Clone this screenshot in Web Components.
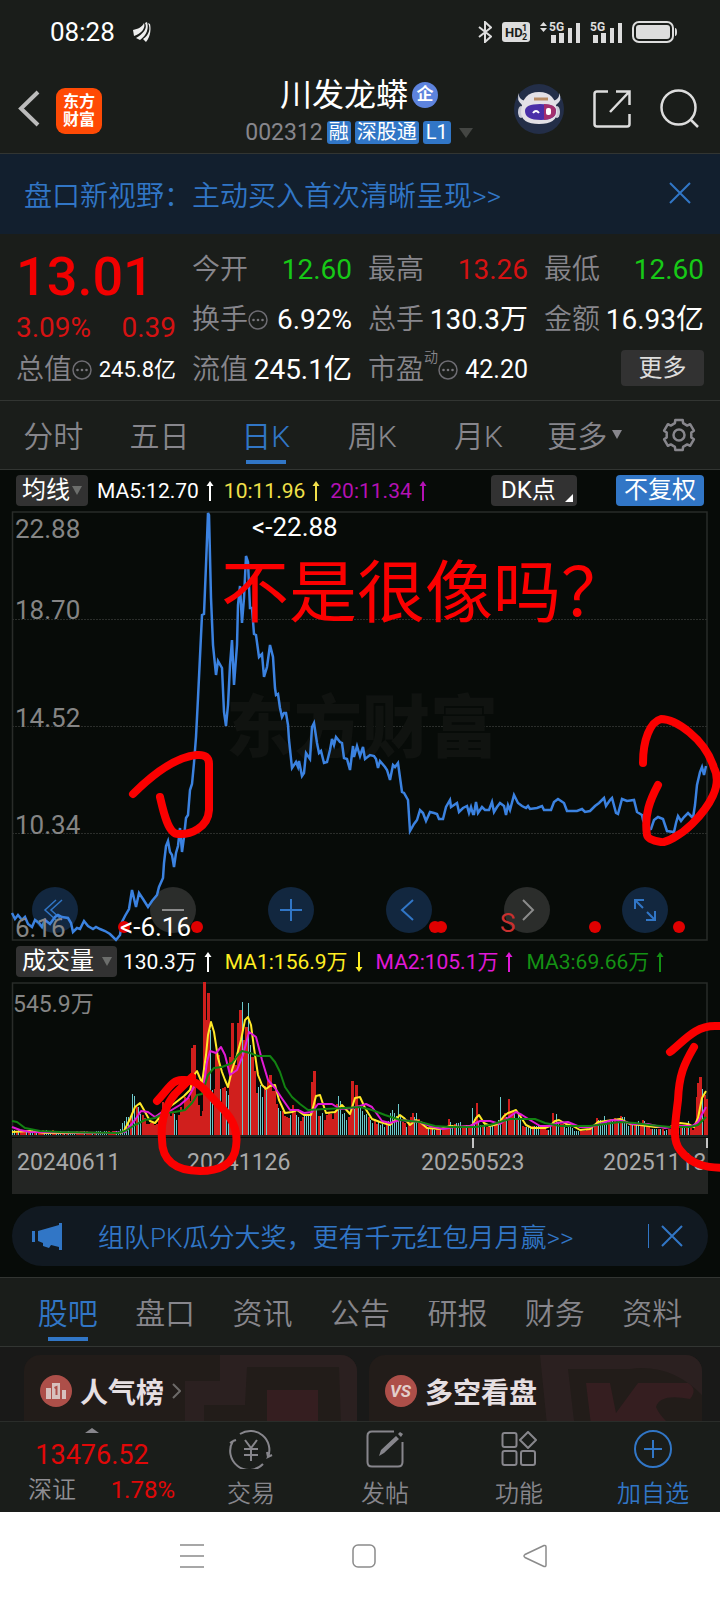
<!DOCTYPE html>
<html lang="zh-CN">
<head>
<meta charset="utf-8">
<meta name="viewport" content="width=device-width, initial-scale=1">
<title>川发龙蟒 002312</title>
<style>
    body {
        margin: 0;
        background: #1a1d1a;
        color: #fff;
        font-family: Roboto, "Noto Sans CJK SC", sans-serif;
        --panel: #1a1d1a;
        --ink: #070b08;
        --line: #323532;
        --muted: #87868c;
        --blue: #3176c6;
        --up: #d51212;
        --down: #17c917;
        --thin: 350;
    }
</style>
</head>
<body>
<stock-page></stock-page>

<script>
// six-tooth gear outline for the settings icon
function gearPath(c, outer, inner) {
    const pts = [];
    for (let k = 0; k < 6; k++) {
        [[-19, inner], [-14, outer], [14, outer], [19, inner]].forEach(([a, r]) => {
            const t = (k * 60 + a) * Math.PI / 180;
            pts.push((c + r * Math.sin(t)).toFixed(1) + ' ' + (c - r * Math.cos(t)).toFixed(1));
        });
    }
    return 'M' + pts.join('L') + 'Z';
}

const ICONS = {
    leaf: [18, 20, '<g fill="#eee"><path d="M0 8C5 7 9 5 11 1 13 6 8 12 1 14Z"/><path d="M12 1C15 6 10 12 3 16L7 18C14 13 16 6 14 0Z"/><path d="M15 1C18 7 16 13 10 17L13 20C18 14 18 6 17 2Z"/></g>'],
    bluetooth: [14, 22, '<path d="M1 6L13 15.500L7 21V1L13 6.500L1 16" fill="none" stroke="#ddd" stroke-width="2"/>'],
    hd: [28, 20, '<rect width="28" height="20" rx="3" fill="#ddd"/><text x="3" y="15" font-size="13" font-weight="700" fill="#1a1d1a">HD</text><text x="20" y="9" font-size="9" font-weight="700" fill="#1a1d1a">1</text><text x="20" y="18" font-size="9" font-weight="700" fill="#1a1d1a">2</text>'],
    signalData: [40, 23, '<g fill="#ddd"><path d="M0 5L3.500 1L7 5ZM0 7L3.500 11L7 7Z"/><text x="9" y="10" font-size="12" font-weight="700">5G</text><path d="M11 14h5v8h-5zM19 12h5v10h-5zM28 7h4v15h-4zM36 2h4v20h-4z"/></g>'],
    signal: [32, 23, '<g fill="#ddd"><text x="0" y="10" font-size="12" font-weight="700">5G</text><path d="M3 14h5v8H3zM11 12h5v10h-5zM20 7h4v15h-4zM28 2h4v20h-4z"/></g>'],
    battery: [45, 22, '<rect x="1" y="1" width="40" height="20" rx="6" fill="none" stroke="#ddd" stroke-width="2"/><rect x="4" y="4" width="34" height="14" rx="3" fill="#ddd"/><path d="M43 7q2 0 2 4t-2 4z" fill="#ddd"/>'],
    back: [22, 37, '<path d="M20 2L3 18.500L20 35" fill="none" stroke="#bbb" stroke-width="4"/>'],
    robot: [50, 50, '<circle cx="25" cy="25" r="25" fill="#232e48"/><path d="M5 9Q4 15 11 17L39 17Q46 15 45 9Q49 16 42 21L8 21Q2 16 5 9Z" fill="#dcdce4"/><ellipse cx="7" cy="28" rx="3" ry="6" fill="#c9c9d4"/><ellipse cx="43" cy="28" rx="3" ry="6" fill="#c9c9d4"/><path d="M7 28Q8 8 25 8Q42 8 43 28Q43 40 25 40Q7 40 7 28Z" fill="#e3e0e6"/><path d="M11 27Q11 20 26 20Q42 20 42 27Q42 36 27 36Q11 36 11 27Z" fill="#4a2fa8"/><path d="M30 20Q42 20 42 27Q42 35 30 36Z" fill="#a32f6e"/><path d="M19 29q3 -4 6 0" stroke="#fff" stroke-width="2" fill="none"/><rect x="32" y="24" width="5" height="7" rx="2" fill="#fff"/><path d="M20 15h14" stroke="#b88a63" stroke-width="3"/>'],
    share: [38, 38, '<g fill="none" stroke="#ddd" stroke-width="2.500"><path d="M15 1.500H4Q1.500 1.500 1.500 4V34Q1.500 36.500 4 36.500H34Q36.500 36.500 36.500 34V24"/><path d="M23 1.500H36.500V15M36 2L17 22"/></g>'],
    search: [40, 40, '<g fill="none" stroke="#ddd" stroke-width="2.500"><circle cx="18.500" cy="18.500" r="17"/><path d="M31 31L38 38"/></g>'],
    close: [22, 22, '<path d="M1 1L21 21M21 1L1 21" stroke="#3176c6" stroke-width="2"/>'],
    dots: [20, 20, '<circle cx="10" cy="10" r="9" fill="none" stroke="#6d6c72" stroke-width="1.500"/><g fill="#77767c"><circle cx="5.500" cy="10" r="1.300"/><circle cx="10" cy="10" r="1.300"/><circle cx="14.500" cy="10" r="1.300"/></g>'],
    gear: [34, 34, '<g fill="none" stroke="#87868c" stroke-width="2.500" stroke-linejoin="round"><path d="' + gearPath(17, 15.5, 12.5) + '"/><circle cx="17" cy="17" r="5.500"/></g>'],
    caret: [10, 9, '<path d="M0 0H10L5 9Z" fill="currentColor"/>'],
    wide: [14, 10, '<path d="M0 0H14L7 10Z" fill="#444643"/>'],
    corner: [8, 8, '<path d="M8 0V8H0Z" fill="#fff"/>'],
    up: [10, 20, '<path d="M5 20V3" stroke="currentColor" stroke-width="2"/><path d="M5 0L8.500 5H1.500Z" fill="currentColor"/>'],
    down: [10, 20, '<path d="M5 0V17" stroke="currentColor" stroke-width="2"/><path d="M5 20L8.500 15H1.500Z" fill="currentColor"/>'],
    rewind: [46, 46, '<path d="M24 13L13 23L24 33M30 13L19 23L30 33" fill="none" stroke="#3176c6" stroke-width="1.500"/>'],
    minus: [46, 46, '<path d="M12 23H34" stroke="#8b8b8b" stroke-width="2"/>'],
    plus: [46, 46, '<path d="M12 23H34M23 12V34" stroke="#3176c6" stroke-width="2"/>'],
    prev: [46, 46, '<path d="M27 13L16 23L27 33" fill="none" stroke="#3176c6" stroke-width="2"/>'],
    next: [46, 46, '<path d="M19 13L29 23L19 33" fill="none" stroke="#8b8b8b" stroke-width="2"/>'],
    expand: [46, 46, '<path d="M13 22V13H22M13 13L21 21M33 24V33H24M33 33L25 25" fill="none" stroke="#3176c6" stroke-width="2"/>'],
    horn: [30, 27, '<path d="M0 8H3V19H0ZM6 8L27 2V0H30V27H27V24L19 22L17 25L11 23V20L6 18Z" fill="#3176c6"/>'],
    podium: [32, 32, '<circle cx="16" cy="16" r="16" fill="#ad4f49"/><path d="M6 13h5v11H6zM12 8h8v16h-8zM22 15h4v9h-4z" fill="#d7c0bd"/><path d="M14.500 13L16.500 12V20" stroke="#ad4f49" stroke-width="2" fill="none"/>'],
    versus: [32, 32, '<circle cx="16" cy="16" r="16" fill="#ad4f49"/><text x="5" y="22" font-size="17" font-weight="700" font-style="italic" fill="#e2cfcc">VS</text>'],
    chevron: [9, 16, '<path d="M1 1L8 8L1 15" fill="none" stroke="#6d6a68" stroke-width="2"/>'],
    peak: [14, 5, '<path d="M0 5L7 0L14 5Z" fill="#87868c"/>'],
    trade: [44, 40, '<g fill="none" stroke="#87868c" stroke-width="2"><path d="M11 5A19 19 0 0 1 39 28L43 26M39 28L38 23"/><path d="M34 35A19 19 0 0 1 4 12L1 14M4 12L7 11"/><path d="M16 11L22 19L28 11M15 20H29M15 26H29M22 19V32"/></g>'],
    post: [38, 38, '<path d="M28 1.500H6Q1.500 1.500 1.500 6V32Q1.500 36.500 6 36.500H32Q36.500 36.500 36.500 32V12" fill="none" stroke="#87868c" stroke-width="2"/><path d="M13 26L15 20L30 6L33 9L18 23ZM32 4L34 2L37 4L35 7Z" fill="#87868c"/>'],
    grid: [36, 36, '<g fill="none" stroke="#87868c" stroke-width="2"><rect x="1.500" y="2" width="14" height="14" rx="2"/><path d="M27 1L35 9L27 17L19 9Z" stroke-linejoin="round"/><rect x="1.500" y="20" width="14" height="14" rx="2"/><rect x="20" y="20" width="14" height="14" rx="2"/></g>'],
    add: [38, 38, '<g fill="none" stroke="#3176c6" stroke-width="2"><circle cx="19" cy="19" r="18"/><path d="M10 19H28M19 10V28"/></g>'],
    menu: [24, 24, '<path d="M0 1H24M0 12H24M0 23H24" stroke="#8b8b8b" stroke-width="1.500"/>'],
    home: [24, 24, '<rect x="1" y="1" width="22" height="22" rx="5" fill="none" stroke="#8b8b8b" stroke-width="1.500"/>'],
    return: [24, 24, '<path d="M21 1.500L2 10.500Q0 12 2 13.500L21 22.500Q23 23 23 21V3Q23 1 21 1.500Z" fill="none" stroke="#8b8b8b" stroke-width="1.500"/>']
};

function define(tag, css, html) {
    customElements.define(tag, class extends HTMLElement {
        constructor() {
            super();
            const shadow = this.attachShadow({ mode: 'open' });
            shadow.innerHTML = `
                <style>
                    * { box-sizing: border-box; }
                    button {
                        margin: 0; padding: 0; border: 0; background: none;
                        color: inherit; font: inherit; cursor: pointer;
                    }
                    ${css}
                </style>
                ${html}`;
        }
    });
}

customElements.define('app-icon', class extends HTMLElement {
    connectedCallback() {
        if (this.shadowRoot) return;
        const [w, h, body] = ICONS[this.getAttribute('name')];
        this.attachShadow({ mode: 'open' }).innerHTML = `
            <style>
                :host { display: inline-block; flex: none; line-height: 0; }
                svg { display: block; font-family: Roboto, sans-serif; }
            </style>
            <svg width="${w}" height="${h}" viewBox="0 0 ${w} ${h}" aria-hidden="true">${body}</svg>`;
    }
});

define('status-bar', `
    :host { display: flex; align-items: center; height: 64px; padding: 0 43px 0 50px; }
    time { font-size: 26px; margin-right: 18px; }
    .right { display: flex; align-items: center; gap: 10px; margin-left: auto; }
`, `
    <time>08:28</time><app-icon name="leaf"></app-icon>
    <div class="right">
        <app-icon name="bluetooth"></app-icon>
        <app-icon name="hd"></app-icon>
        <app-icon name="signalData"></app-icon>
        <app-icon name="signal"></app-icon>
        <app-icon name="battery"></app-icon>
    </div>
`);

define('app-header', `
    :host {
        display: grid; grid-template-columns: 1fr auto 1fr; align-items: center; box-sizing: border-box;
        height: 90px; padding: 4px 20px 0 18px; border-bottom: 1px solid var(--line);
    }
    .side { display: flex; align-items: center; gap: 16px; }
    .side.end { justify-content: flex-end; gap: 29px; }
    .logo {
        width: 46px; height: 46px; padding-top: 5px; border-radius: 9px; background: #ff4a05;
        font-size: 16px; line-height: 18px; font-weight: 700; text-align: center;
    }
    .title { display: flex; flex-direction: column; align-items: center; gap: 8px; }
    h1 { display: flex; align-items: center; gap: 4px; margin: 0; font-size: 32px; line-height: 36px; font-weight: 400; }
    .badge {
        width: 26px; height: 26px; border-radius: 50%; background: #5d83dd;
        font-size: 17px; line-height: 25px; font-weight: 700; text-align: center;
    }
    .sub { display: flex; align-items: center; gap: 4px; color: var(--muted); font-size: 23px; line-height: 23px; }
    .tag { padding: 0 2px; border-radius: 3px; background: var(--blue); color: #fff; font-size: 20px; line-height: 23px; }
    .tag.level { padding: 0 3px; }
    .sub app-icon { margin-left: 4px; }
`, `
    <div class="side">
        <button aria-label="返回"><app-icon name="back"></app-icon></button>
        <div class="logo">东方<br>财富</div>
    </div>
    <div class="title">
        <h1>川发龙蟒<span class="badge">企</span></h1>
        <div class="sub">002312<span class="tag">融</span><span class="tag">深股通</span><span class="tag level">L1</span><app-icon name="wide"></app-icon></div>
    </div>
    <div class="side end">
        <button aria-label="助手"><app-icon name="robot"></app-icon></button>
        <button aria-label="分享"><app-icon name="share"></app-icon></button>
        <button aria-label="搜索"><app-icon name="search"></app-icon></button>
    </div>
`);

define('tip-banner', `
    :host {
        display: flex; align-items: center; justify-content: space-between; height: 80px;
        padding: 0 29px 0 24px; background: #121f2e; color: var(--blue); font-size: 28px;
    }
    a { color: inherit; text-decoration: none; font-weight: var(--thin); }
`, `
    <a href="#"><slot></slot></a>
    <button aria-label="关闭"><app-icon name="close"></app-icon></button>
`);

// label on the left, value on the right
define('quote-cell', `
    :host { display: flex; align-items: center; justify-content: space-between; height: 50px; white-space: nowrap; }
    .label { display: flex; align-items: center; color: var(--muted); font-weight: var(--thin); }
    .value { color: var(--tone, #fff); font-size: var(--size, 28px); }
`, `
    <span class="label"><slot name="label"></slot></span>
    <span class="value"><slot></slot></span>
`);

define('quote-panel', `
    :host {
        display: grid; grid-template-columns: repeat(4, 1fr); column-gap: 16px;
        padding: 11px 16px 5px; border-bottom: 1px solid var(--line); font-size: 28px; line-height: 36px;
    }
    .price { height: 66px; color: #f20000; font-size: 54px; line-height: 64px; font-weight: 500; }
    .change { display: flex; justify-content: space-between; height: 34px; line-height: 34px; color: var(--up); }
    .red { --tone: var(--up); }
    .green { --tone: var(--down); }
    .small { --size: 22px; }
    .mid { --size: 25px; }
    sup { align-self: flex-start; font-size: 14px; line-height: 10px; }
    .more { display: flex; align-items: center; justify-content: flex-end; height: 46px; }
    .more button { width: 83px; height: 36px; border-radius: 4px; background: #323232; color: #ddd; font-size: 24px; line-height: 36px; }
`, `
    <div>
        <div class="price">13.01</div>
        <div class="change"><span>3.09%</span><span>0.39</span></div>
        <quote-cell class="small"><span slot="label">总值</span><app-icon slot="label" name="dots"></app-icon>245.8亿</quote-cell>
    </div>
    <div>
        <quote-cell class="green"><span slot="label">今开</span>12.60</quote-cell>
        <quote-cell><span slot="label">换手</span><app-icon slot="label" name="dots"></app-icon>6.92%</quote-cell>
        <quote-cell><span slot="label">流值</span>245.1亿</quote-cell>
    </div>
    <div>
        <quote-cell class="red"><span slot="label">最高</span>13.26</quote-cell>
        <quote-cell><span slot="label">总手</span>130.3万</quote-cell>
        <quote-cell class="mid"><span slot="label">市盈</span><sup slot="label">动</sup><app-icon slot="label" name="dots"></app-icon>42.20</quote-cell>
    </div>
    <div>
        <quote-cell class="green"><span slot="label">最低</span>12.60</quote-cell>
        <quote-cell><span slot="label">金额</span>16.93亿</quote-cell>
        <div class="more"><button>更多</button></div>
    </div>
`);

define('tab-strip', `
    :host {
        display: flex; align-items: center; height: 69px; background: var(--panel);
        border-bottom: 1px solid var(--line); color: var(--muted); font-size: 30px;
    }
    ::slotted(*) { flex: 1; }
    ::slotted(.tool) { flex: 0 0 82px; }
`, `<slot></slot>`);

define('tab-item', `
    :host { display: flex; justify-content: center; height: 68px; font-weight: var(--thin); }
    button { display: flex; align-items: center; gap: 5px; padding-bottom: 2px; white-space: nowrap; }
    :host([active]) button {
        color: var(--blue);
        background: linear-gradient(var(--blue), var(--blue)) center 59px / 40px 4px no-repeat;
    }
`, `<button role="tab"><slot></slot></button>`);

define('ma-value', `
    :host { display: inline-flex; align-items: center; gap: 6px; font-size: 21px; line-height: 30px; white-space: nowrap; }
`, `<slot></slot>`);

define('chart-toolbar', `
    :host { display: flex; align-items: center; gap: 9px; height: 41px; padding: 0 16px; }
    :host([wide]) { gap: 12px; }
`, `<slot></slot>`);

const PRICE = `12,913 15,919 18,915 22,920 25,917 28,924 32,927 35,920 39,923 42,927 45,920 50,924 55,917 58,915 62,917
    68,918 71,923 73,932 77,928 80,929 84,921 88,926 93,929 96,927 100,929 105,931 110,934 116,940 120,935 122,922 125,916 129,909
    132,890 136,907 139,893 143,899 148,907 152,901 157,895 159,887 163,878 164,863 166,846 168,841 170,852 172,855
    174,867 176,853 178,846 180,828 182,852 184,837 186,818 188,815 190,790 192,784 194,763 196,737 198,698 202,615
    204,614 206,565 208,513 209,515 211,598 213,645 216,675 218,661 222,668 224,712 226,726 228,705 230,665 232,640
    234,685 237,645 238,605 240,586 242,623 244,598 246,556 248,562 250,608 252,608 254,634 256,635 259,657 262,654
    264,677 267,667 270,645 273,657 275,688 276,695 278,694 280,708 282,717 284,713 286,713 288,725 289,740 292,768
    296,762 298,767 299,761 302,776 304,773 306,753 310,759 312,727 314,723 317,743 319,753 321,751 324,763 327,762
    330,750 332,739 334,745 336,737 340,742 342,743 344,758 347,759 350,770 353,746 354,757 357,746 360,756 363,747
    365,759 370,755 374,756 376,759 378,768 380,761 385,767 387,770 390,780 393,765 395,767 398,763 402,792 404,793
    408,800 410,831 414,824 417,820 420,810 423,813 426,821 430,812 434,813 437,814 439,819 443,819 446,807 450,800
    451,807 454,805 457,803 459,812 463,808 467,806 469,813 471,807 473,814 474,814 476,802 478,813 482,807 485,810
    489,810 492,802 494,812 497,807 500,803 504,806 506,815 508,805 510,810 514,795 518,803 522,806 526,808 528,806
    530,809 537,808 542,806 544,810 551,810 554,802 558,799 564,803 567,811 577,811 582,809 585,812 590,811 595,806
    599,803 604,798 606,806 610,800 612,798 616,813 618,814 622,799 627,801 634,800 637,812 642,815 643,820 647,830
    651,829 654,820 658,817 663,819 667,831 674,832 676,823 678,816 681,821 684,817 688,813 693,818 695,805 697,785
    700,772 702,767 704,775 706,766`;

// x, bar height
const VOLUME = [[12,5],[30,5],[60,4],[100,4],[118,4],[122,12],[127,19],[130,18],[132,41],[134,39],[138,28],[142,20],[150,12],
    [158,14],[160,16],[162,33],[168,30],[172,22],[178,20],[184,38],[190,34],[192,87],[194,90],[196,40],[198,30],[202,24],[204,153],
    [206,115],[208,142],[210,105],[212,45],[214,46],[216,82],[218,80],[220,46],[226,44],[228,40],[230,78],[232,112],[234,70],
    [236,70],[238,112],[240,125],[242,133],[244,95],[246,108],[248,132],[250,90],[252,78],[254,64],[256,42],[260,50],[266,45],
    [268,54],[270,60],[274,44],[280,24],[286,18],[292,30],[298,18],[304,20],[310,22],[312,53],[314,64],[316,26],[326,20],
    [334,24],[338,39],[340,34],[344,22],[348,18],[350,22],[352,54],[354,26],[356,50],[358,28],[360,30],[364,20],[378,14],
    [386,10],[392,25],[394,22],[398,31],[400,20],[406,8],[412,22],[416,22],[422,10],[430,6],[446,8],[448,16],[452,10],[460,13],
    [468,8],[470,8],[472,27],[474,16],[476,32],[478,14],[488,9],[496,12],[498,15],[500,38],[502,18],[504,22],[506,18],[508,36],
    [510,24],[518,20],[524,8],[540,9],[548,5],[550,8],[552,22],[554,12],[556,21],[560,11],[570,10],[576,4],[590,6],[596,17],
    [604,19],[612,16],[622,18],[630,10],[638,14],[644,14],[650,6],[672,6],[680,8],[688,14],[692,5],[694,8],[696,38],[698,52],
    [700,58],[702,46],[704,40],[706,36]];

// tall bars that closed lower
const FALLING = [134, 210, 212, 220, 242, 248, 250, 260, 266, 338];

const MA_YELLOW = `12,1132 30,1131 45,1133 75,1133 120,1133 124,1131 130,1119 135,1107 140,1103 144,1110 150,1121 155,1123 160,1117
    168,1108 175,1103 184,1096 190,1090 194,1075 197,1071 202,1083 206,1055 208,1035 211,1022 214,1032 218,1058 222,1072
    225,1080 228,1087 232,1070 237,1055 241,1040 245,1020 248,1017 251,1025 254,1048 258,1075 262,1085 266,1089 270,1086
    275,1085 279,1100 285,1113 292,1112 297,1110 304,1115 311,1115 316,1096 320,1095 326,1113 335,1112 342,1105 350,1114
    355,1098 360,1097 365,1108 372,1119 380,1122 390,1125 395,1120 400,1115 404,1118 410,1125 416,1120 420,1122 427,1128
    440,1129 450,1126 460,1127 472,1126 476,1118 479,1115 484,1123 490,1126 498,1124 504,1116 508,1113 516,1110 520,1116
    526,1125 532,1128 545,1128 550,1126 555,1121 559,1120 566,1124 573,1126 580,1130 590,1129 598,1122 606,1121 620,1119
    630,1124 640,1125 655,1127 670,1127 680,1123 688,1124 694,1127 698,1118 702,1098 706,1091`;
const MA_PINK = `12,1127 20,1130 30,1132 110,1133 125,1132 135,1120 141,1111 148,1112 155,1117 162,1112 170,1111 180,1105 188,1098
    195,1085 203,1090 207,1062 210,1051 216,1053 221,1047 225,1055 230,1075 237,1070 243,1055 249,1032 256,1037 262,1060
    268,1080 275,1088 281,1097 290,1110 298,1110 304,1113 312,1112 318,1104 332,1104 340,1109 352,1108 360,1106 366,1104
    372,1107 382,1121 390,1123 400,1120 410,1121 420,1122 430,1126 443,1129 455,1127 470,1126 480,1121 490,1121 500,1124
    508,1118 516,1112 522,1115 530,1120 540,1126 550,1126 557,1123 568,1122 580,1127 590,1127 600,1124 612,1120 622,1121
    632,1124 648,1124 665,1128 680,1126 692,1126 698,1122 706,1107`;
const MA_GREEN = `12,1121 17,1122 25,1128 40,1131 60,1132 118,1133 125,1131 135,1125 145,1120 155,1118 165,1113 175,1112 185,1110
    192,1103 197,1095 202,1094 208,1075 214,1068 222,1067 232,1063 238,1055 242,1051 250,1053 258,1056 270,1056 275,1062
    280,1072 285,1087 292,1097 300,1104 308,1110 325,1109 345,1108 360,1107 372,1110 385,1115 400,1120 420,1122 435,1126
    450,1127 475,1127 490,1125 500,1122 510,1119 535,1119 545,1123 560,1126 590,1126 605,1124 620,1122 635,1123 650,1125
    670,1127 690,1127 698,1125 706,1117`;

function volumeBars() {
    let seed = 7, out = '', i = 0;
    const rand = () => (seed = (seed * 16807) % 2147483647) / 2147483647;
    for (let x = 12; x <= 706; x += 2) {
        while (VOLUME[i + 1] && VOLUME[i + 1][0] <= x) i++;
        const [x0, h0] = VOLUME[i], next = VOLUME[i + 1];
        let h = h0;
        if (x !== x0 && next) h = (h0 + (next[1] - h0) * (x - x0) / (next[0] - x0)) * (0.7 + rand() * 0.4);
        h = Math.max(2, Math.round(h));
        const solid = (x > 150 && x < 170) || (x > 176 && x < 209);
        const spike = x === x0 && h0 > 46;
        const falling = FALLING.includes(x) || (!solid && !spike && rand() < 0.55);
        out += falling
            ? `<rect x="${x}" y="${1135 - h}" width="1" height="${h}" fill="#6cc9cb"/>`
            : `<rect x="${x - (spike ? 1 : 0)}" y="${1135 - h}" width="${spike ? 3 : 2}" height="${h}" fill="#d01f1d"/>`;
    }
    return out;
}

define('price-chart', `
    :host { display: grid; }
    svg { grid-area: 1 / 1; display: block; width: 100%; overflow: visible; pointer-events: none; }
    .zoom {
        grid-area: 1 / 1; align-self: end; display: flex; justify-content: space-between;
        padding: 0 52px 8px 32px;
    }
    .zoom button { width: 46px; height: 46px; border-radius: 50%; background: #12273f; }
    .zoom .off { background: #2b2d2b; }
    .axis { fill: #858585; }
`, `
    <div class="zoom">
        <button aria-label="后退"><app-icon name="rewind"></app-icon></button>
        <button class="off" aria-label="缩小"><app-icon name="minus"></app-icon></button>
        <button aria-label="放大"><app-icon name="plus"></app-icon></button>
        <button aria-label="左移"><app-icon name="prev"></app-icon></button>
        <button class="off" aria-label="右移"><app-icon name="next"></app-icon></button>
        <button aria-label="全屏"><app-icon name="expand"></app-icon></button>
    </div>
    <svg viewBox="0 511 720 430" font-size="26">
        <rect x="12.500" y="512" width="694.500" height="428" fill="none" stroke="#292c29" stroke-width="1.500"/>
        <path d="M12 619.500H707M12 726.500H707M12 833.500H707" stroke="#2b2e2b" stroke-dasharray="2 1"/>
        <text x="226" y="752" font-size="68" font-weight="900" fill="#101310">东方财富</text>
        <polyline points="${PRICE}" fill="none" stroke="#3b82e0" stroke-width="2.500"/>
        <g fill="#e00000">
            <circle cx="124" cy="927" r="6"/><circle cx="197" cy="927" r="6"/><circle cx="435" cy="927" r="6"/>
            <circle cx="441" cy="927" r="6"/><circle cx="595" cy="927" r="6"/><circle cx="679" cy="927" r="6"/>
        </g>
        <g class="axis">
            <text x="15" y="538">22.88</text><text x="15" y="619">18.70</text><text x="15" y="727">14.52</text>
            <text x="15" y="834">10.34</text><text x="15" y="937">6.16</text>
        </g>
        <text x="252" y="536" fill="#fff">&lt;-22.88</text>
        <text x="120" y="936" fill="#fff">&lt;-6.16</text>
        <text x="500" y="932" fill="#c9302f">S</text>
    </svg>
`);

define('volume-chart', `
    :host { display: block; }
    svg { display: block; width: 100%; }
`, `
    <svg viewBox="0 982 720 212" font-size="23">
        <rect x="12" y="1138" width="696" height="56" fill="#232523"/>
        <rect x="12.500" y="983" width="694.500" height="153" fill="none" stroke="#292c29" stroke-width="1.500"/>
        <text x="13" y="1012" fill="#858585">545.9万</text>
        ${volumeBars()}
        <g fill="none" stroke-width="2" stroke-linejoin="round">
            <polyline points="${MA_YELLOW}" stroke="#ffe928"/>
            <polyline points="${MA_PINK}" stroke="#e21ad6"/>
            <polyline points="${MA_GREEN}" stroke="#128212"/>
        </g>
        <path d="M473 1138V1148M707 1138V1148" stroke="#c4c4c4" stroke-width="2"/>
        <g fill="#a9a9a9">
            <text x="17" y="1170">20240611</text><text x="187" y="1170">20241126</text>
            <text x="421" y="1170">20250523</text><text x="603" y="1170">20251113</text>
        </g>
    </svg>
`);

define('chart-panel', `
    :host { display: block; position: relative; overflow: hidden; background: var(--ink); }
    .notes { position: absolute; inset: 0; width: 100%; height: 100%; pointer-events: none; }
    chart-toolbar button {
        display: flex; align-items: center; height: 31px; border-radius: 4px; gap: 2px; padding: 0 5px 0 6px;
        background: #323232; color: #fff; font-size: 24px; line-height: 31px; white-space: nowrap;
    }
    .yellow { color: #f1e04a; }
    .gold { color: #ffee22; }
    .purple { color: #b312b3; }
    .pink { color: #e019d8; }
    .green { color: #149114; }
    .caret { color: #6c6e6c; }
    chart-toolbar .dk { width: 86px; margin-left: auto; padding: 0 4px 0 10px; justify-content: space-between; }
    .dk app-icon { align-self: flex-end; padding-bottom: 4px; }
    chart-toolbar .rights { width: 88px; margin-left: 30px; padding: 0; justify-content: center; background: var(--blue); }
    .avg { width: 72px; }
    .pick { width: 101px; justify-content: space-between; margin-right: -6px; }
`, `
    <chart-toolbar>
        <button class="avg">均线<app-icon class="caret" name="caret"></app-icon></button>
        <ma-value>MA5:12.70<app-icon name="up"></app-icon></ma-value>
        <ma-value class="yellow">10:11.96<app-icon name="up"></app-icon></ma-value>
        <ma-value class="purple">20:11.34<app-icon name="up"></app-icon></ma-value>
        <button class="dk">DK点<app-icon name="corner"></app-icon></button>
        <button class="rights">不复权</button>
    </chart-toolbar>
    <price-chart></price-chart>
    <chart-toolbar wide>
        <button class="pick">成交量<app-icon class="caret" name="caret"></app-icon></button>
        <ma-value>130.3万<app-icon name="up"></app-icon></ma-value>
        <ma-value class="gold">MA1:156.9万<app-icon name="down"></app-icon></ma-value>
        <ma-value class="pink">MA2:105.1万<app-icon name="up"></app-icon></ma-value>
        <ma-value class="green">MA3:69.66万<app-icon name="up"></app-icon></ma-value>
    </chart-toolbar>
    <volume-chart></volume-chart>
    <svg class="notes" viewBox="0 470 720 724">
        <text x="221" y="617" font-size="68" fill="#fb0000">不是很像吗？</text>
        <g fill="none" stroke="#fb0000" stroke-width="8" stroke-linecap="round" stroke-linejoin="round">
            <path d="M133 794C150 777 175 757 197 755Q209 754 209 764L209 810C208 828 190 835 178 834C168 834 163 810 160 797"/>
            <path d="M643 763C643 740 650 722 661 719C675 719 705 738 714 768C723 785 709 807 692 824C680 836 665 843 661 842Q648 840 647 835C644 815 650 800 658 785"/>
            <path d="M157 1101C168 1090 172 1079 183 1080C197 1079 205 1090 217 1103C230 1115 239 1128 236 1147C234 1165 218 1171 200 1171C175 1171 162 1160 162 1140C160 1118 168 1102 175 1094L192 1077"/>
            <path d="M670 1052C685 1040 695 1026 715 1026H730"/>
            <path d="M694 1047C684 1064 679 1075 678 1100C675 1125 672 1140 680 1150C692 1166 708 1168 730 1168"/>
        </g>
    </svg>
`);

define('promo-pill', `
    :host { display: block; padding: 12px 12px 11px; background: var(--ink); border-bottom: 1px solid var(--line); }
    .pill {
        display: flex; align-items: center; height: 60px; padding: 0 25px 0 20px; border-radius: 30px;
        background: #111921; color: var(--blue); font-size: 26px;
    }
    a { flex: 1; margin-left: 36px; padding-bottom: 2px; color: inherit; text-decoration: none; font-weight: var(--thin); }
    button { display: flex; align-items: center; padding-left: 12px; border-left: 1px solid var(--blue); height: 24px; }
`, `
    <div class="pill">
        <app-icon name="horn"></app-icon>
        <a href="#"><slot></slot></a>
        <button aria-label="关闭"><app-icon name="close"></app-icon></button>
    </div>
`);

define('feed-card', `
    :host {
        display: grid; height: 100px; border-radius: 16px; overflow: hidden; background: #221c19;
        color: #e6dfe2; font-size: 28px; font-weight: 700;
    }
    .head, ::slotted(svg) { grid-area: 1 / 1; }
    ::slotted(svg) { justify-self: end; }
    .head { display: flex; align-items: center; gap: 8px; height: 72px; padding: 0 16px; }
`, `
    <slot name="art"></slot>
    <div class="head"><slot></slot></div>
`);

define('feed-row', `
    :host {
        display: grid; grid-template-columns: 1fr 1fr; gap: 12px; height: 74px; overflow: hidden; box-sizing: border-box;
        padding: 8px 18px 0 24px; background: #191918;
    }
    svg { display: block; }
`, `
    <feed-card>
        <svg slot="art" width="172" height="100" viewBox="0 0 172 100">
            <path d="M0 26H35V0H172V100H157L154 12H62L60 50H19V100H0Z" fill="#2b2020"/>
            <rect x="82" y="35" width="51" height="40" fill="#351e20"/>
        </svg>
        <app-icon name="podium"></app-icon>人气榜<app-icon name="chevron"></app-icon>
    </feed-card>
    <feed-card>
        <svg slot="art" width="162" height="100" viewBox="0 0 162 100">
            <path d="M0 0H162V40Q130 8 90 14H28L38 100H10Z" fill="#2b2020"/>
            <path d="M46 28H70L76 58L98 28H148Q158 34 150 44Q120 38 116 52Q122 66 142 78H52Z" fill="#351e20"/>
        </svg>
        <app-icon name="versus"></app-icon>多空看盘
    </feed-card>
`);

define('bottom-item', `
    :host { display: block; }
    button { display: flex; flex-direction: column; align-items: center; width: 100%; font-size: 24px; line-height: 36px; font-weight: var(--thin); }
    .icon { display: flex; align-items: center; height: 54px; }
`, `
    <button><span class="icon"><slot name="icon"></slot></span><slot></slot></button>
`);

define('bottom-bar', `
    :host {
        display: grid; grid-template-columns: 184px repeat(4, 1fr); height: 91px; box-sizing: border-box;
        border-top: 1px solid #2a2d2a; background: var(--panel); color: var(--muted);
    }
    .index { display: flex; flex-direction: column; align-items: center; padding-top: 6px; color: #e00808; }
    .index b { font-weight: 400; font-size: 27px; line-height: 44px; }
    .row { display: flex; justify-content: space-between; width: 100%; padding: 0 9px 0 28px; font-size: 24px; line-height: 26px; }
    .row span { color: #8f8e93; font-weight: var(--thin); }
    .add { color: var(--blue); }
`, `
    <div class="index">
        <app-icon name="peak"></app-icon>
        <b>13476.52</b>
        <div class="row"><span>深证</span>1.78%</div>
    </div>
    <bottom-item><app-icon slot="icon" name="trade"></app-icon>交易</bottom-item>
    <bottom-item><app-icon slot="icon" name="post"></app-icon>发帖</bottom-item>
    <bottom-item><app-icon slot="icon" name="grid"></app-icon>功能</bottom-item>
    <bottom-item class="add"><app-icon slot="icon" name="add"></app-icon>加自选</bottom-item>
`);

define('system-nav', `
    :host {
        display: flex; align-items: center; justify-content: space-between; height: 88px;
        padding: 0 24% 0 25%; background: #fff; box-sizing: border-box;
    }
    button { display: flex; }
`, `
    <button aria-label="菜单"><app-icon name="menu"></app-icon></button>
    <button aria-label="主页"><app-icon name="home"></app-icon></button>
    <button aria-label="返回"><app-icon name="return"></app-icon></button>
`);

define('stock-page', `
    :host { display: block; }
    .gear { display: flex; justify-content: center; }
    tab-strip.info { padding: 0 19px; }
`, `
    <status-bar></status-bar>
    <app-header></app-header>
    <tip-banner>盘口新视野：主动买入首次清晰呈现&gt;&gt;</tip-banner>
    <quote-panel></quote-panel>
    <tab-strip role="tablist">
        <tab-item>分时</tab-item>
        <tab-item>五日</tab-item>
        <tab-item active>日K</tab-item>
        <tab-item>周K</tab-item>
        <tab-item>月K</tab-item>
        <tab-item>更多<app-icon name="caret"></app-icon></tab-item>
        <button class="tool gear" aria-label="设置"><app-icon name="gear"></app-icon></button>
    </tab-strip>
    <chart-panel></chart-panel>
    <promo-pill>组队PK瓜分大奖，更有千元红包月月赢&gt;&gt;</promo-pill>
    <tab-strip class="info" role="tablist">
        <tab-item active>股吧</tab-item>
        <tab-item>盘口</tab-item>
        <tab-item>资讯</tab-item>
        <tab-item>公告</tab-item>
        <tab-item>研报</tab-item>
        <tab-item>财务</tab-item>
        <tab-item>资料</tab-item>
    </tab-strip>
    <feed-row></feed-row>
    <bottom-bar></bottom-bar>
    <system-nav></system-nav>
`);
</script>
</body>
</html>
